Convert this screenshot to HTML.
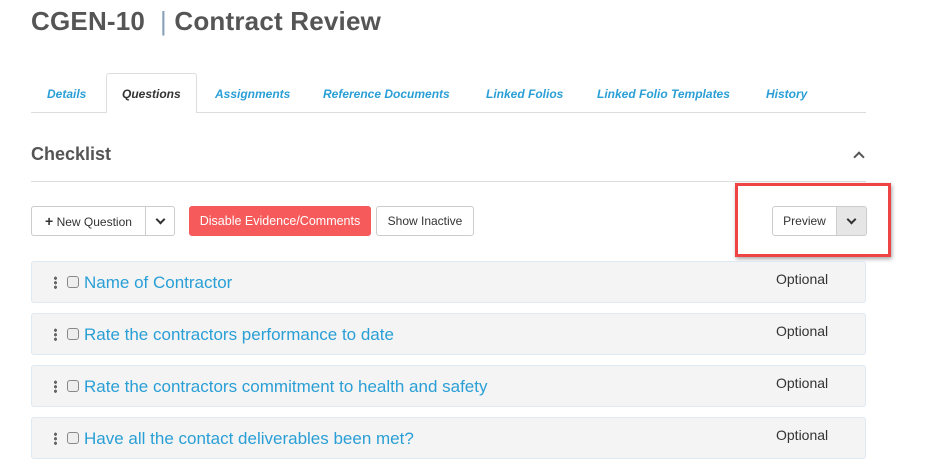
<!DOCTYPE html>
<html><head><style>
*{margin:0;padding:0;box-sizing:border-box}
body{width:927px;height:455px;overflow:hidden;background:#fff;font-family:"Liberation Sans",sans-serif;position:relative;color:#555}
.a{position:absolute}
h1{position:absolute;left:31px;top:6px;font-size:26px;font-weight:bold;color:#555;white-space:nowrap;letter-spacing:0.2px}
h1 span{color:#8aa0b8;font-weight:normal}
.tab{position:absolute;top:87px;font-size:12px;font-style:italic;font-weight:bold;color:#2a9fd6;white-space:nowrap}
.btn{position:absolute;top:206px;height:30px;border:1px solid #ccc;border-radius:3px;background:#fff;font-size:12px;color:#333;line-height:28px;text-align:center;white-space:nowrap}
.row{position:absolute;left:31px;width:835px;height:42px;background:#f4f4f4;border:1px solid #dde9f3;border-radius:3px}
.row .d{position:absolute;left:22px;top:14px;width:3px;height:13px;background:
radial-gradient(circle,#666 1.5px,transparent 1.7px) 0 0/3px 4.5px repeat-y}
.row .c{position:absolute;left:35px;top:14px;width:12px;height:12px;border:1px solid #888;border-radius:3px;background:#eee}
.row .t{position:absolute;left:52px;top:11px;font-size:17px;color:#2a9fd6;white-space:nowrap}
.row .o{position:absolute;left:744px;top:9px;font-size:14px;color:#333}
.chev{display:inline-block;width:7px;height:7px;border-right:2px solid #333;border-bottom:2px solid #333;transform:rotate(45deg);position:relative;top:-2px}
</style></head><body>
<h1>CGEN-10 &nbsp;<span>|</span> Contract Review</h1>
<div class="a" style="left:106px;top:73px;width:91px;height:40px;border:1px solid #ddd;border-bottom:none;background:#fff;border-radius:3px 3px 0 0"></div>
<div class="a" style="left:31px;top:112px;width:75px;height:1px;background:#ddd"></div>
<div class="a" style="left:197px;top:112px;width:669px;height:1px;background:#ddd"></div>
<div class="tab" style="left:47px">Details</div>
<div class="tab" style="left:122px;color:#333">Questions</div>
<div class="tab" style="left:215px">Assignments</div>
<div class="tab" style="left:323px">Reference Documents</div>
<div class="tab" style="left:486px">Linked Folios</div>
<div class="tab" style="left:597px">Linked Folio Templates</div>
<div class="tab" style="left:766px">History</div>
<div class="a" style="left:31px;top:144px;font-size:18px;font-weight:bold;color:#555">Checklist</div>
<div class="a" style="left:855px;top:153px;width:8px;height:8px;border-left:2px solid #555;border-top:2px solid #555;transform:rotate(45deg)"></div>
<div class="a" style="left:31px;top:181px;width:835px;height:1px;background:#ddd"></div>
<div class="btn" style="left:31px;width:115px;border-radius:3px 0 0 3px"><b style="font-size:14px">+</b> New Question</div>
<div class="btn" style="left:145px;width:30px;border-radius:0 3px 3px 0"><span class="chev"></span></div>
<div class="btn" style="left:189px;width:182px;background:#f65a5a;border-color:#f65a5a;color:#fff;font-size:12.5px">Disable Evidence/Comments</div>
<div class="btn" style="left:376px;width:98px">Show Inactive</div>
<div class="btn" style="left:772px;width:65px;border-radius:3px 0 0 3px">Preview</div>
<div class="btn" style="left:836px;width:31px;background:#e6e6e6;border-radius:0 3px 3px 0"><span class="chev"></span></div>
<div class="a" style="left:735px;top:183px;width:156px;height:74px;border:3px solid #ee4444;box-shadow:1px 2px 4px rgba(0,0,0,.35)"></div>
<div class="row" style="top:261px"><div class="d"></div><div class="c"></div><div class="t">Name of Contractor</div><div class="o">Optional</div></div>
<div class="row" style="top:313px"><div class="d"></div><div class="c"></div><div class="t">Rate the contractors performance to date</div><div class="o">Optional</div></div>
<div class="row" style="top:365px"><div class="d"></div><div class="c"></div><div class="t">Rate the contractors commitment to health and safety</div><div class="o">Optional</div></div>
<div class="row" style="top:417px"><div class="d"></div><div class="c"></div><div class="t">Have all the contact deliverables been met?</div><div class="o">Optional</div></div>
</body></html>
